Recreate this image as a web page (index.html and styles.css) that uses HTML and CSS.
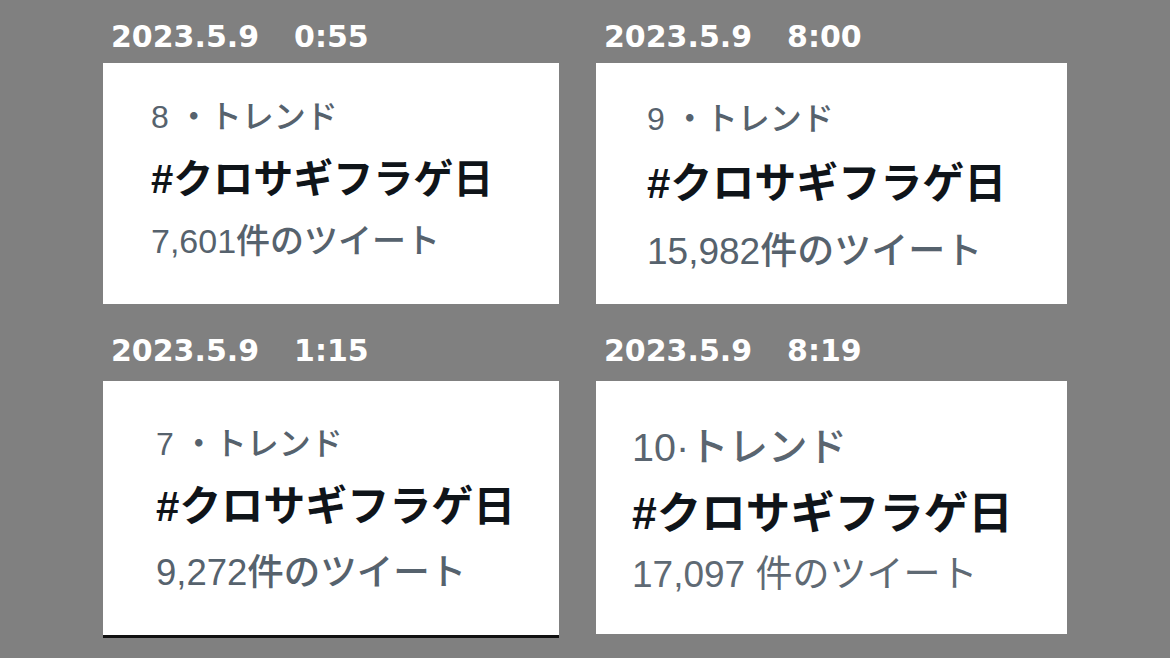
FILE: index.html
```html
<!DOCTYPE html>
<html lang="ja">
<head>
  <meta charset="UTF-8">
  <meta name="viewport" content="width=device-width, initial-scale=1.0">
  <title>#クロサギフラゲ日 トレンド推移</title>
  <link rel="stylesheet" href="styles.css">
</head>
<body>
  <div class="board">

    <div class="shot">
      <div class="stamp">2023.5.9　<span class="time">0:55</span></div>
      <div class="card card-a">
        <div class="rank">8 ・トレンド</div>
        <div class="tag">#クロサギフラゲ日</div>
        <div class="count">7,601件のツイート</div>
      </div>
    </div>

    <div class="shot">
      <div class="stamp">2023.5.9　<span class="time">8:00</span></div>
      <div class="card card-b">
        <div class="rank">9 ・トレンド</div>
        <div class="tag">#クロサギフラゲ日</div>
        <div class="count">15,982件のツイート</div>
      </div>
    </div>

    <div class="shot lower">
      <div class="stamp">2023.5.9　<span class="time">1:15</span></div>
      <div class="card card-c">
        <div class="rank">7 ・トレンド</div>
        <div class="tag">#クロサギフラゲ日</div>
        <div class="count">9,272件のツイート</div>
      </div>
    </div>

    <div class="shot lower">
      <div class="stamp">2023.5.9　<span class="time">8:19</span></div>
      <div class="card card-d">
        <div class="rank">10·トレンド</div>
        <div class="tag">#クロサギフラゲ日</div>
        <div class="count">17,097 件のツイート</div>
      </div>
    </div>

  </div>
</body>
</html>
```

FILE: styles.css
```css
body {
  margin: 0;
  background-color: #808080;
  font-family: "Liberation Sans", "Noto Sans CJK JP", sans-serif;
}

.board {
  display: grid;
  grid-template-columns: 456px 471px;
  column-gap: 37px;
  row-gap: 30px;
  padding: 20px 0 0 103px;
}

.shot {
  display: flex;
  flex-direction: column;
}

.stamp {
  color: #fff;
  font-family: "DejaVu Sans", "Noto Sans CJK JP", sans-serif;
  font-weight: bold;
  font-size: 30px;
  line-height: 34px;
  padding-left: 8px;
  margin-bottom: 9px;
  white-space: nowrap;
}

.stamp .time {
  margin-left: 5px;
}

.lower .stamp {
  margin-bottom: 13px;
}

.card {
  background-color: #fff;
  box-sizing: border-box;
  height: 241px;
  white-space: nowrap;
}

.rank {
  color: #56626d;
  font-size: 32px;
  font-weight: 500;
  line-height: 40px;
}

.tag {
  color: #0f1419;
  font-weight: bold;
  font-size: 40px;
  line-height: 52px;
}

.count {
  color: #56626d;
  font-size: 34px;
  font-weight: 500;
  line-height: 44px;
}

/* 0:55 */
.card-a {
  padding: 34px 0 0 48px;
}

.card-a .tag {
  margin-top: 16px;
}

.card-a .count {
  margin-top: 14px;
}

/* 8:00 */
.card-b {
  padding: 36px 0 0 51px;
}

.card-b .tag {
  font-size: 42px;
  margin-top: 19px;
}

.card-b .count {
  font-size: 37px;
  margin-top: 20px;
}

/* 1:15 */
.card-c {
  height: 257px;
  padding: 43px 0 0 53px;
  border-bottom: 3px solid #111;
}

.card-c .tag {
  font-size: 42px;
  margin-top: 17px;
}

.card-c .count {
  font-size: 36.5px;
  margin-top: 18px;
}

/* 8:19 */
.card-d {
  height: 253px;
  padding: 44px 0 0 36px;
}

.card-d .rank {
  color: #5a6570;
  font-size: 39.5px;
  line-height: 44px;
}

.card-d .tag {
  font-size: 44.5px;
  line-height: 54px;
  margin-top: 18px;
}

.card-d .count {
  color: #5f6a74;
  font-size: 37px;
  font-weight: normal;
  margin-top: 12px;
}
```
